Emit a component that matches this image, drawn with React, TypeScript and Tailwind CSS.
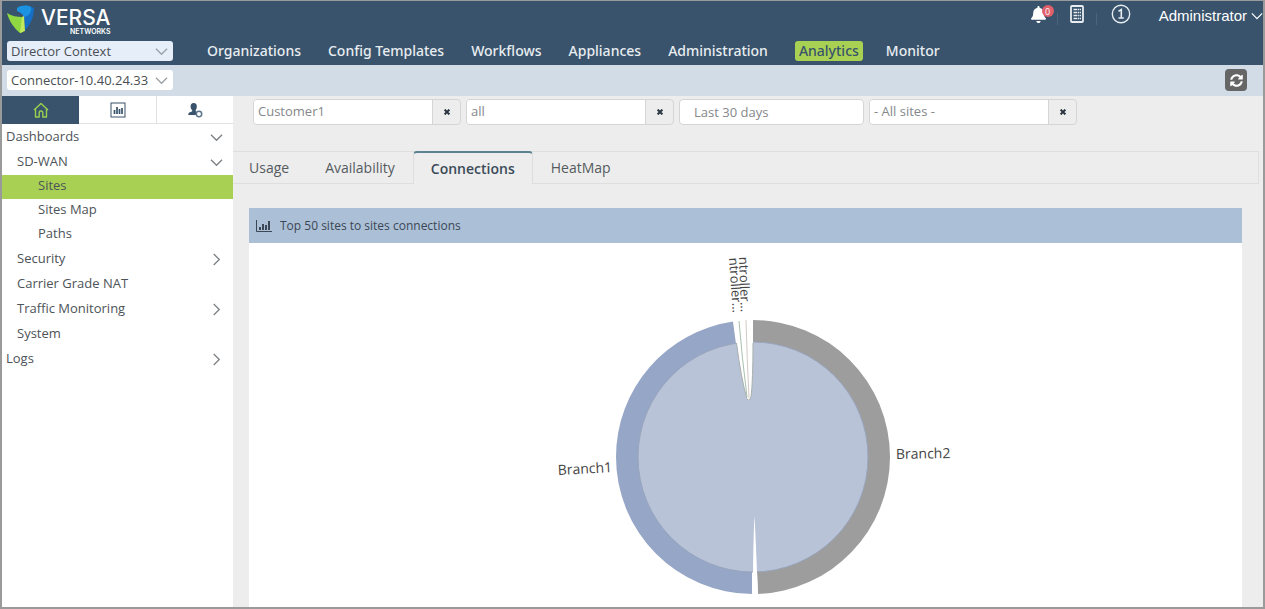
import { useState } from 'react'
import { FaBell, FaSyncAlt } from 'react-icons/fa'

type NavNode = {
  label: string
  level: 1 | 2 | 3
  arrow?: 'down' | 'right'
}

const NAV = [
  'Organizations',
  'Config Templates',
  'Workflows',
  'Appliances',
  'Administration',
  'Analytics',
  'Monitor',
]

const TREE: NavNode[] = [
  { label: 'Dashboards', level: 1, arrow: 'down' },
  { label: 'SD-WAN', level: 2, arrow: 'down' },
  { label: 'Sites', level: 3 },
  { label: 'Sites Map', level: 3 },
  { label: 'Paths', level: 3 },
  { label: 'Security', level: 2, arrow: 'right' },
  { label: 'Carrier Grade NAT', level: 2 },
  { label: 'Traffic Monitoring', level: 2, arrow: 'right' },
  { label: 'System', level: 2 },
  { label: 'Logs', level: 1, arrow: 'right' },
]

const LEVEL_CLASS = {
  1: 'h-[25px] pl-1',
  2: 'h-[25px] pl-[15px]',
  3: 'h-6 pl-9',
}

const TABS = ['Usage', 'Availability', 'Connections', 'HeatMap']

function Chevron({ dir, className }: { dir: 'down' | 'right'; className?: string }) {
  return (
    <svg viewBox="0 0 14 14" className={className} fill="none" stroke="currentColor" strokeWidth="1.4">
      <path d={dir === 'down' ? 'M1 4l6 6 6-6' : 'M4 1l6 6-6 6'} />
    </svg>
  )
}

function Logo() {
  return (
    <a href="#" aria-label="Versa Networks" className="mt-1 flex items-start gap-[6px] text-white">
      <svg viewBox="0 0 28 30" className="h-[30px] w-7">
        <path d="M10 3C15 0 21 0 27 3c0 8-3 16-9 22l-1-13c-1-3-4-5-7-6z" fill="#156fc4" />
        <path d="M10 3C15 0 20 0 24 2c1 5-2 9-7 10-1-3-4-5-7-6z" fill="#1b93e2" />
        <path d="M0 8c5 3 10 4 15 4l1 15-3 1C7 23 2 16 0 8z" fill="#8fd842" />
        <path d="M15 12l2-1 1 15-5 2z" fill="#c3ea5c" />
      </svg>
      <span className="flex flex-col items-end pt-[5px] font-['Inter',sans-serif]">
        <span className="text-[21px] font-medium leading-4">VERSA</span>
        <span className="text-[7px] font-semibold leading-[11px]">NETWORKS</span>
      </span>
    </a>
  )
}

function ContextSelect({ label, value, tone }: { label: string; value: string; tone: string }) {
  return (
    <div className="relative w-[166px]">
      <select
        aria-label={label}
        className={`block h-5 w-full appearance-none rounded-[3px] pl-1 text-[13px] leading-5 text-[#4a4f54] ${tone}`}
      >
        <option>{value}</option>
      </select>
      <Chevron dir="down" className="pointer-events-none absolute right-[5px] top-1 h-[13px] w-[13px] text-[#9aa1a7]" />
    </div>
  )
}

function ClearableInput({ label, value }: { label: string; value: string }) {
  const [text, setText] = useState(value)
  return (
    <div className="flex h-[26px] w-52 rounded-[4px] border border-[#d5d5d5]">
      <input
        aria-label={label}
        value={text}
        onChange={e => setText(e.target.value)}
        className="min-w-0 flex-1 rounded-l-[3px] bg-white px-1 text-[13px] text-[#85888a]"
      />
      <button
        aria-label={`Clear ${label}`}
        onClick={() => setText('')}
        className="flex w-7 items-center justify-center border-l border-[#d5d5d5] text-[#2c3540]"
      >
        <svg viewBox="0 0 6 6" className="h-[6px] w-[6px]" stroke="currentColor" strokeWidth="2">
          <path d="M.6.6l4.8 4.8M5.4.6L.6 5.4" />
        </svg>
      </button>
    </div>
  )
}

function TopIcons() {
  return (
    <div className="flex items-start text-white">
      <button aria-label="Notifications" className="relative mt-[3px] h-5 w-[23px]">
        <FaBell className="h-[17px] w-[15px]" />
        <span className="absolute right-0 top-px flex h-3 w-3 items-center justify-center rounded-full bg-[#e0606c] text-[9px] leading-none">
          0
        </span>
      </button>
      <span className="ml-[3px] mt-3 h-3 w-px bg-[#4a657c]" />
      <button aria-label="Tasks" className="ml-3 mt-1">
        <svg viewBox="0 0 14 18" className="h-[18px] w-[14px]" fill="none" stroke="#e6ecf0">
          <rect x="1" y="1" width="12" height="16" rx="1" strokeWidth="1.8" />
          <path d="M3.500 4.500h7.500M3.500 7.500h7.500M3.500 10.500h7.500M3.500 13.500h7.500" strokeWidth="1.6" strokeDasharray="3.500 .6 1.400 .6" />
        </svg>
      </button>
      <span className="ml-3 mt-3 h-3 w-px bg-[#4a657c]" />
      <button aria-label="Information" className="ml-[14px] mt-[3px]">
        <svg viewBox="0 0 20 20" className="h-5 w-5" fill="none" stroke="#e6ecf0">
          <circle cx="10" cy="10" r="8.700" strokeWidth="1.400" />
          <path d="M7.500 7.300L10.300 5.500V14M7.500 14h5.300" strokeWidth="1.600" />
        </svg>
      </button>
      <button className="ml-7 mt-[5px] flex items-center gap-1 font-['Liberation_Sans',sans-serif] text-[15px] leading-5">
        Administrator
        <Chevron dir="down" className="h-3 w-3" />
      </button>
    </div>
  )
}

function Sidebar() {
  const [active, setActive] = useState('Sites')
  return (
    <aside className="w-[231px] shrink-0 bg-white">
      <div className="flex h-7 text-[#38536b]">
        <button aria-label="Home" className="flex w-[77px] items-center justify-center bg-[#38536b] text-[#9bd04e]">
          <svg viewBox="0 0 16 16" className="h-4 w-4" fill="none" stroke="currentColor" strokeWidth="1.4" strokeLinejoin="round">
            <path d="M1 8l7-6.500L15 8M2.500 7v8h3.700v-4.200a1.800 1.800 0 013.600 0V15h3.700V7" />
          </svg>
        </button>
        <button aria-label="Reports" className="flex w-[78px] items-center justify-center border-b border-r border-[#e2e2e2]">
          <svg viewBox="0 0 16 16" className="h-4 w-4" fill="none" stroke="currentColor">
            <rect x="1" y="1" width="14" height="14" strokeWidth="1" />
            <path d="M4.500 12V8M7 12V5M9.500 12V7M12 12V6" strokeWidth="1.700" />
          </svg>
        </button>
        <button aria-label="User settings" className="flex flex-1 items-center justify-center border-b border-[#e2e2e2]">
          <svg viewBox="0 0 16 16" className="h-4 w-4">
            <path
              d="M6.500 1C9 1 10 2.500 9.800 5 9.600 7 9 7.500 8.700 8.500c0 1 .5 1.500 1.300 1.700L9.500 13H1.200c0-2 1-2.600 3-3.200 1-.3 1.300-.8.9-1.600C4 7.200 3.600 6 3.600 4.300 3.600 2.300 4.700 1 6.500 1z"
              fill="#38536b"
            />
            <circle cx="12" cy="12" r="2.700" fill="#fff" stroke="#5d7386" strokeWidth="1.500" />
          </svg>
        </button>
      </div>
      <nav aria-label="Dashboards" className="pt-px">
        <ul>
          {TREE.map(node => (
            <li key={node.label}>
              <button
                onClick={() => setActive(node.label)}
                className={`flex w-full items-center justify-between pr-[10px] text-left text-[13px] leading-5 text-[#4d5358] ${LEVEL_CLASS[node.level]} ${
                  active === node.label ? 'bg-[#a8d154]' : ''
                }`}
              >
                <span className="pb-1">{node.label}</span>
                {node.arrow && <Chevron dir={node.arrow} className="h-[13px] w-[13px] text-[#7d8286]" />}
              </button>
            </li>
          ))}
        </ul>
      </nav>
    </aside>
  )
}

function ChordChart() {
  return (
    <svg viewBox="0 0 420 356" className="h-[356px] w-[420px]" role="img" aria-label="Site to site connections">
      {/* outer ring */}
      <path d="M210 77A137 137 0 01347 214A137 137 0 01215 350.900L214 328A114 114 0 00324 214A114 114 0 00210 100z" fill="#9d9d9d" />
      <path d="M209 351A137 137 0 0173 214A137 137 0 01190 78.500L193 101A114 114 0 0096 214A114 114 0 00209 328z" fill="#96a6c6" />

      {/* ribbon between the two branches */}
      <circle cx="210" cy="214" r="115" fill="#b8c3d7" stroke="#98a5bd" strokeWidth="1" />

      {/* gaps */}
      <path d="M190 76L193.500 100Q198 135 204 156Q206 159 208 154Q210 138 210 100V75z" fill="#fff" />
      <path d="M193.500 100Q198 135 204 156Q206 159 208 154Q210 138 210 100" fill="none" stroke="#a9b0ae" strokeWidth="1" />
      <path d="M209 353L210 329Q210.500 290 211.500 273Q212.500 290 214 329L215 353z" fill="#fff" />

      {/* controller slivers */}
      <path d="M196 78Q199 115 204 154" fill="none" stroke="#a9bfae" strokeWidth="1" />
      <path d="M203 77Q204 115 206 155" fill="none" stroke="#d3c8c5" strokeWidth="1" />

      <g fill="#444" fontSize="14">
        <text fontSize="13" transform="translate(186 15) rotate(86)">ntroller...</text>
        <text fontSize="13" transform="translate(196 14) rotate(88)">ntroller...</text>
        <text transform="translate(353 216) rotate(-1)">Branch2</text>
        <text transform="translate(15 232) rotate(-3)">Branch1</text>
      </g>
    </svg>
  )
}

export default function App() {
  const [tab, setTab] = useState('Connections')

  return (
    <div className="flex min-h-screen flex-col border-2 border-t border-[#9a9a9a] bg-[#ededed] font-['Open_Sans',sans-serif]">
      <header className="bg-[#38536b]">
        <div className="flex h-10 items-start justify-between pl-[5px]">
          <Logo />
          <TopIcons />
        </div>
        <div className="flex h-6 items-start pl-[5px]">
          <ContextSelect label="Context" value="Director Context" tone="bg-[#e6eefa]" />
          <nav aria-label="Main" className="ml-[34px] flex gap-[27px] font-['Noto_Sans',sans-serif] text-[14px] font-medium leading-5 text-[#e8edf1]">
            {NAV.map(item => (
              <a
                key={item}
                href="#"
                className={item === 'Analytics' ? '-mr-1 rounded-[3px] bg-[#a8d154] px-1 text-[#38536b]' : ''}
              >
                {item}
              </a>
            ))}
          </nav>
        </div>
      </header>

      <div className="flex h-[31px] items-center justify-between bg-[#d1dce6] pb-px pl-[5px] pr-4">
        <ContextSelect label="Appliance" value="Connector-10.40.24.33" tone="bg-white" />
        <button aria-label="Refresh" className="flex h-[22px] w-[22px] items-center justify-center rounded-[4px] bg-[#666] text-white">
          <FaSyncAlt className="h-[13px] w-[13px]" />
        </button>
      </div>

      <div className="flex flex-1">
        <Sidebar />

        <main className="flex min-w-0 flex-1 flex-col">
          <div className="flex flex-wrap gap-[5px] pl-5 pt-[3px]">
            <ClearableInput label="Organization" value="Customer1" />
            <ClearableInput label="Appliance filter" value="all" />
            <input
              aria-label="Period"
              defaultValue="Last 30 days"
              className="h-[26px] w-[185px] rounded-[4px] border border-[#d5d5d5] bg-white px-[14px] text-[13px] text-[#85888a]"
            />
            <ClearableInput label="Sites filter" value="- All sites -" />
          </div>

          {/* Tabs */}
          <div role="tablist" className="mr-1 mt-[26px] flex h-[33px] border-y border-r border-[#dedede] text-[14px] text-[#555b60]">
            {TABS.map(t => (
              <button
                key={t}
                role="tab"
                aria-selected={tab === t}
                onClick={() => setTab(t)}
                className={
                  tab === t
                    ? '-my-px rounded-t-[4px] border-x border-t-2 border-x-[#dedede] border-t-[#5b8192] bg-[#ededed] px-[17px] font-semibold text-[#3b4a58]'
                    : 'px-[18px] first:pl-4'
                }
              >
                {t}
              </button>
            ))}
          </div>

          {/* Chart panel */}
          <section className="ml-4 mr-[21px] mt-6 flex flex-1 flex-col bg-white">
            <h2 className="flex h-[35px] items-center gap-2 bg-[#abc0d7] pl-[7px] text-[12px] text-[#3b4754]">
              <svg viewBox="0 0 16 12" className="h-3 w-4" fill="none" stroke="currentColor">
                <path d="M.5 0v11.500H16" />
                <path d="M4 10V7M7 10V4M10 10V5M13 10V1" strokeWidth="2" />
              </svg>
              Top 50 sites to sites connections
            </h2>
            <div className="flex flex-1 justify-center pl-[14px]">
              <ChordChart />
            </div>
          </section>
        </main>
      </div>
    </div>
  )
}
